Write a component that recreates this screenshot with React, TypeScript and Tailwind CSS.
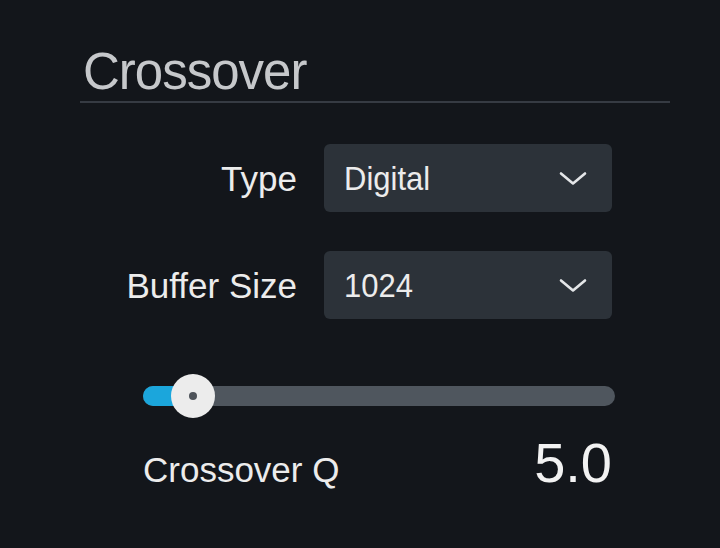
const Q_MIN = 1;
const Q_MAX = 40;

function Chevron() {
  return (
    <svg width="28" height="15" viewBox="0 0 28 15" fill="none" className="shrink-0">
      <path d="M2 2.5 L14 12.5 L26 2.5" stroke="#e4e6e8" strokeWidth="2.6" strokeLinecap="round" strokeLinejoin="round" />
    </svg>
  );
}

function Select({ value }: { value: string }) {
  return (
    <button className="flex h-[68px] w-[288px] items-center justify-between rounded-[6px] bg-[#2c3239] pl-[20px] pr-[25px] text-left text-[31px] leading-none text-[#ececec]">
      <span className="origin-left scale-y-110">{value}</span>
      <Chevron />
    </button>
  );
}

export default function App() {
  const q = 5.0;
  const pct = ((q - Q_MIN) / (Q_MAX - Q_MIN)) * 100;

  return (
    <div
      className="h-[548px] w-[720px] overflow-hidden bg-[#13161b] pl-[80px] pt-[46px]"
      style={{ fontFamily: '"Liberation Sans", Arial, sans-serif' }}
    >
      <h1 className="h-[51px] pl-[3px] text-[51px] leading-none tracking-[-1px] text-[#c6c8cb]">
        Crossover
      </h1>
      <div className="mt-[4px] h-[2px] w-[590px] bg-[#363b43]" />

      <div className="mt-[41px] grid grid-cols-[217px_288px] items-center gap-x-[27px] gap-y-[39px]">
        <label className="text-right text-[35px] leading-none text-[#ececec]">Type</label>
        <Select value="Digital" />
        <label className="text-right text-[35px] leading-none text-[#ececec]">Buffer Size</label>
        <Select value="1024" />
      </div>

      <div className="relative ml-[63px] mt-[55px] flex h-[44px] w-[472px] items-center">
        <div className="h-[20px] w-full overflow-hidden rounded-full bg-[#4f565e]">
          <div className="h-full bg-[#1ba6dc]" style={{ width: `${pct}%` }} />
        </div>
        <div
          className="absolute top-0 flex h-[44px] w-[44px] -translate-x-1/2 items-center justify-center rounded-full bg-[#ececec]"
          style={{ left: `calc(${pct}% + 2px)` }}
        >
          <div className="h-[8px] w-[8px] rounded-full bg-[#4e535a]" />
        </div>
      </div>

      <div className="ml-[63px] mt-[17px] flex w-[469px] items-baseline justify-between">
        <span className="text-[35px] leading-none text-[#ececec]">Crossover Q</span>
        <span className="text-[56px] leading-none text-[#f2f2f2]">{q.toFixed(1)}</span>
      </div>
    </div>
  );
}
